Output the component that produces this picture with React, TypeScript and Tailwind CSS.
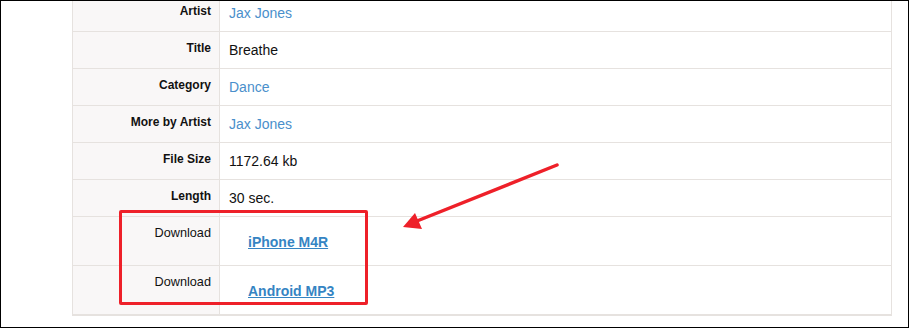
import React from "react";

type Row = {
  label: string;
  value: string;
  kind?: "text" | "link" | "download";
};

const rows: Row[] = [
  { label: "Artist", value: "Jax Jones", kind: "link" },
  { label: "Title", value: "Breathe" },
  { label: "Category", value: "Dance", kind: "link" },
  { label: "More by Artist", value: "Jax Jones", kind: "link" },
  { label: "File Size", value: "1172.64 kb" },
  { label: "Length", value: "30 sec." },
  { label: "Download", value: "iPhone M4R", kind: "download" },
  { label: "Download", value: "Android MP3", kind: "download" },
];

function InfoRow({ row }: { row: Row }) {
  const isDownload = row.kind === "download";
  return (
    <div
      className={`flex border-b border-[#e6e2df] ${isDownload ? "h-[49px]" : "h-[37px]"}`}
    >
      <div
        className={`w-[147px] shrink-0 border-r border-[#e6e2df] bg-[#f9f7f7] pr-[8px] pt-[8px] text-right leading-[16px] text-[#111] ${
          isDownload ? "text-[12.7px] font-normal" : "text-[12px] font-bold"
        }`}
      >
        {row.label}
      </div>
      <div className="flex-1 pl-[9px] pt-[8px] text-[14px] leading-[20px] text-[#111]">
        {row.kind === "link" && (
          <a href="#" className="text-[#4a8fcb]">
            {row.value}
          </a>
        )}
        {row.kind === "download" && (
          <div className="pl-[19px] pt-[7px]">
            <a href="#" className="font-bold text-[#3584c3] underline">
              {row.value}
            </a>
          </div>
        )}
        {!row.kind && <span>{row.value}</span>}
      </div>
    </div>
  );
}

export default function App() {
  return (
    <div
      className="relative h-[328px] w-[909px] overflow-hidden border border-black bg-white"
      style={{ fontFamily: '"Liberation Sans", Arial, sans-serif' }}
    >
      <div className="-mt-[6px] ml-[71px] w-[820px] border-x border-b border-[#e6e2df]">
        {rows.map((row, i) => (
          <InfoRow key={i} row={row} />
        ))}
      </div>

      {/* annotation: red box around downloads */}
      <div className="absolute left-[118px] top-[209px] h-[95px] w-[249px] rounded-[2px] border-[3px] border-[#ee2029]" />

      {/* annotation: arrow */}
      <svg
        className="absolute left-0 top-0"
        width="909"
        height="328"
        viewBox="0 0 909 328"
      >
        <line
          x1="556"
          y1="164"
          x2="416"
          y2="220"
          stroke="#ee2029"
          strokeWidth="3.5"
          strokeLinecap="round"
        />
        <polygon points="402,226 414,212 421,228" fill="#ee2029" />
      </svg>
    </div>
  );
}
